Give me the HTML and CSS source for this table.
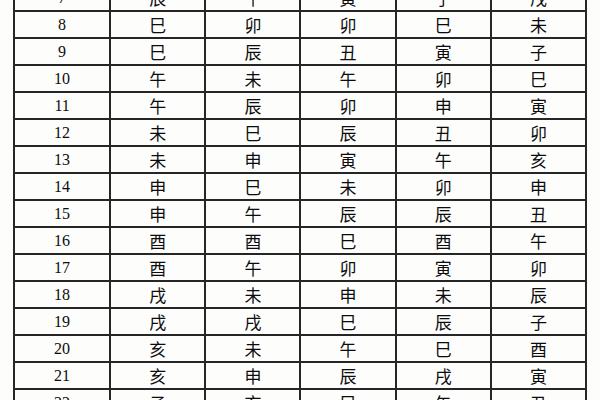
FILE: index.html
```html
<!DOCTYPE html>
<html lang="zh">
<head>
<meta charset="utf-8">
<link rel="stylesheet" href="styles.css">
</head>
<body>
<div class="page">
<table class="grid">
<colgroup><col class="c1"><col class="c"><col class="c"><col class="c"><col class="c"><col class="c"></colgroup>
<tbody>
<tr><td class="n">7</td><td>辰</td><td>午</td><td>寅</td><td>子</td><td>戌</td></tr>
<tr><td class="n">8</td><td>巳</td><td>卯</td><td>卯</td><td>巳</td><td>未</td></tr>
<tr><td class="n">9</td><td>巳</td><td>辰</td><td>丑</td><td>寅</td><td>子</td></tr>
<tr><td class="n">10</td><td>午</td><td>未</td><td>午</td><td>卯</td><td>巳</td></tr>
<tr><td class="n">11</td><td>午</td><td>辰</td><td>卯</td><td>申</td><td>寅</td></tr>
<tr><td class="n">12</td><td>未</td><td>巳</td><td>辰</td><td>丑</td><td>卯</td></tr>
<tr><td class="n">13</td><td>未</td><td>申</td><td>寅</td><td>午</td><td>亥</td></tr>
<tr><td class="n">14</td><td>申</td><td>巳</td><td>未</td><td>卯</td><td>申</td></tr>
<tr><td class="n">15</td><td>申</td><td>午</td><td>辰</td><td>辰</td><td>丑</td></tr>
<tr><td class="n">16</td><td>酉</td><td>酉</td><td>巳</td><td>酉</td><td>午</td></tr>
<tr><td class="n">17</td><td>酉</td><td>午</td><td>卯</td><td>寅</td><td>卯</td></tr>
<tr><td class="n">18</td><td>戌</td><td>未</td><td>申</td><td>未</td><td>辰</td></tr>
<tr><td class="n">19</td><td>戌</td><td>戌</td><td>巳</td><td>辰</td><td>子</td></tr>
<tr><td class="n">20</td><td>亥</td><td>未</td><td>午</td><td>巳</td><td>酉</td></tr>
<tr><td class="n">21</td><td>亥</td><td>申</td><td>辰</td><td>戌</td><td>寅</td></tr>
<tr><td class="n">22</td><td>子</td><td>亥</td><td>巳</td><td>午</td><td>丑</td></tr>
</tbody>
</table>
</div>
</body>
</html>
```
FILE: styles.css
```css
html, body {
  margin: 0;
  padding: 0;
  background: #fdfdfc;
}
.page {
  width: 600px;
  height: 400px;
  overflow: hidden;
  padding-left: 13px;
  box-sizing: border-box;
}
.grid {
  border-collapse: collapse;
  table-layout: fixed;
  width: 574px;
  margin-top: -17px;
  color: #0c0c0c;
}
.c1 { width: 96px; }
.c { width: 95px; }
.grid td {
  height: 25px;
  padding: 0;
  border: 2px solid #262626;
  text-align: center;
  vertical-align: middle;
  font-family: "Noto Sans CJK SC", "Noto Sans CJK TC", sans-serif;
  font-size: 17px;
  line-height: 20px;
}
.grid td.n {
  font-family: "Liberation Serif", "DejaVu Serif", serif;
  font-size: 16px;
}
```
